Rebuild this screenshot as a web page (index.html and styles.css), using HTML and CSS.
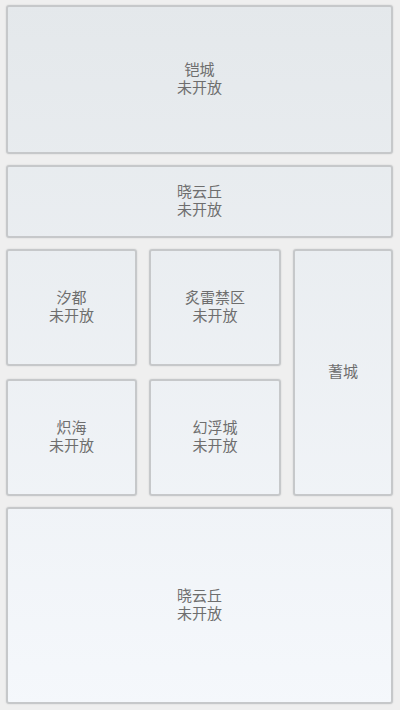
FILE: index.html
```html
<!DOCTYPE html>
<html lang="zh">
<head>
<meta charset="utf-8">
<link rel="stylesheet" href="styles.css">
</head>
<body>
<main class="page">
  <div class="card card-top"><span class="line">铠城</span><span class="line">未开放</span></div>
  <div class="card card-mid"><span class="line">晓云丘</span><span class="line">未开放</span></div>
  <div class="grid">
    <div class="card"><span class="line">汐都</span><span class="line">未开放</span></div>
    <div class="card"><span class="line">炙雷禁区</span><span class="line">未开放</span></div>
    <div class="card tall"><span class="line">蓍城</span></div>
    <div class="card"><span class="line">炽海</span><span class="line">未开放</span></div>
    <div class="card"><span class="line">幻浮城</span><span class="line">未开放</span></div>
  </div>
  <div class="card card-bottom"><span class="line">晓云丘</span><span class="line">未开放</span></div>
</main>
</body>
</html>
```
FILE: styles.css
```css
html, body {
  margin: 0;
  padding: 0;
  background: #efefef;
}
body {
  width: 400px;
  height: 710px;
  overflow: hidden;
  font-family: "Noto Sans CJK SC", "Noto Sans", sans-serif;
}
.page {
  display: flex;
  flex-direction: column;
  gap: 11px;
  padding: 5px 7px 0 6px;
}
.card {
  box-sizing: border-box;
  display: flex;
  flex-direction: column;
  align-items: center;
  justify-content: center;
  padding-bottom: 3px;
  border: 2px solid #c6c8ca;
  border-radius: 3px;
  box-shadow: 0 0 2px rgba(0, 0, 0, 0.12);
  background: linear-gradient(180deg, #e4e8eb 0%, #f5f8fc 100%) fixed;
  color: #6e6e6e;
  font-size: 15px;
}
.line {
  display: block;
  height: 18px;
  line-height: 18px;
  overflow: visible;
}
.card-top { height: 149px; }
.card-mid { height: 73px; }
.card-bottom { height: 197px; }
.grid {
  display: grid;
  grid-template-columns: 131px 132px 100px;
  grid-template-rows: 117px 117px;
  column-gap: 12px;
  row-gap: 13px;
}
.tall {
  grid-column: 3;
  grid-row: 1 / span 2;
}
```
